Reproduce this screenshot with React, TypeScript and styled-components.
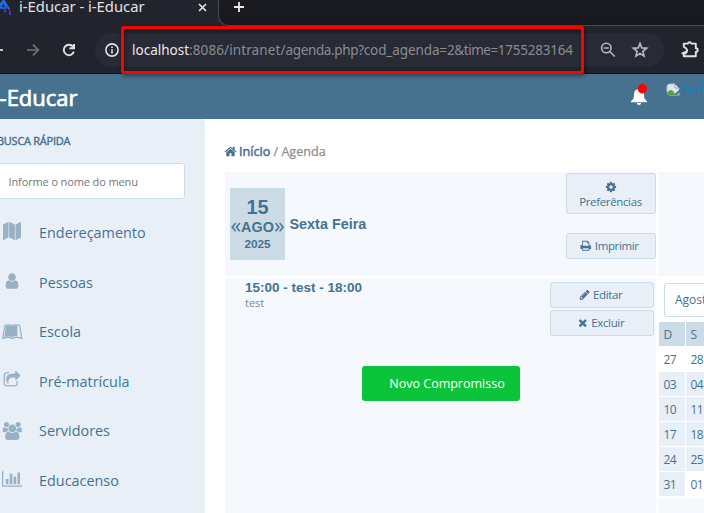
import React from "react";
import styled, { createGlobalStyle } from "styled-components";

const GlobalStyle = createGlobalStyle`
  * { box-sizing: border-box; }
  html, body { margin: 0; padding: 0; overflow: hidden; }
  body { font-family: "Open Sans", sans-serif; color: #47728f; background: #fff; }
`;

const Window = styled.div`
  width: 704px;
  height: 513px;
  overflow: hidden;
  display: flex;
  flex-direction: column;
`;

/* Browser chrome */
const TabStrip = styled.div`
  height: 26px;
  flex: none;
  display: flex;
  background: linear-gradient(#1b1c22, #17181c);
`;
const Tab = styled.div`
  width: 218px;
  height: 26px;
  display: flex;
  align-items: flex-start;
  background: #22242d;
  font: 14.8px/18px "Noto Sans", sans-serif;
  color: #e2e2e3;
`;
const Favicon = styled.svg`
  width: 11px;
  height: 16px;
  flex: none;
`;
const TabTitle = styled.span`
  width: 179px;
  margin: -3px 0 0 8px;
  white-space: nowrap;
`;
const CloseIcon = styled.svg`
  width: 9px;
  height: 9px;
  margin-top: 3px;
`;
const StripRest = styled.div`
  flex: 1;
  border-left: 1px solid #4b4c53;
  border-bottom: 1px solid #4b4c53;
  border-bottom-left-radius: 10px;
  background: linear-gradient(#1b1c22, #17181c);
`;
const StripCorner = styled.div`
  flex: 1;
  display: flex;
  background: #22242d;
`;
const PlusIcon = styled.svg`
  display: block;
  width: 12px;
  height: 12px;
  margin: 1px 0 0 14px;
`;
const Toolbar = styled.div`
  height: 48px;
  flex: none;
  display: flex;
  align-items: center;
  background: #22242d;
  border-bottom: 1px solid #101116;
`;
const NavButtons = styled.svg`
  width: 95px;
  height: 34px;
  flex: none;
`;
const Omnibox = styled.div`
  width: 569px;
  height: 34px;
  display: flex;
  align-items: center;
  border-radius: 17px;
  background: #282a35;
`;
const InfoChip = styled.div`
  width: 27px;
  height: 34px;
  flex: none;
  display: flex;
  align-items: center;
  padding-left: 10px;
`;
const UrlFrame = styled.div`
  width: 463px;
  height: 48px;
  flex: none;
  position: relative;
  margin-left: -1px;
  display: flex;
  align-items: center;
  padding-left: 8px;
  border: 3px solid #f00;
  border-radius: 2px;
  box-shadow: 1px 2px 4px rgba(0, 0, 0, 0.45), inset 1px 2px 4px rgba(0, 0, 0, 0.3);
  font: 13.5px/20px "Noto Sans", sans-serif;
  white-space: nowrap;
`;
const UrlPart = styled.span<{ $tracking: number; $host?: boolean }>`
  letter-spacing: ${(p) => p.$tracking}px;
  color: ${(p) => (p.$host ? "#e8e8ea" : "#8b8c92")};
`;
const OmniIcons = styled.svg`
  width: 70px;
  height: 34px;
  margin-left: 10px;
`;
const PuzzleIcon = styled.svg`
  width: 22px;
  height: 22px;
  margin-left: 14px;
  flex: none;
`;

/* Application header */
const Header = styled.header`
  height: 45px;
  flex: none;
  display: flex;
  background: #47728f;
  color: #fff;
`;
const Brand = styled.div`
  width: 636px;
  margin-left: -6px;
  flex: none;
  font-size: 22px;
  line-height: 46px;
  -webkit-text-stroke: 0.7px #fff;
`;
const BellIcon = styled.svg`
  width: 20px;
  height: 24px;
  margin-top: 8px;
  flex: none;
`;
const Avatar = styled.div`
  display: flex;
  margin: 9px 0 0 16px;
  color: #1e7fbd;
  font-size: 12px;
  line-height: 14px;
  white-space: nowrap;
  -webkit-text-stroke: 0.3px currentColor;
`;
const BrokenImage = styled.svg`
  width: 14px;
  height: 14px;
  flex: none;
`;

/* Sidebar */
const Body = styled.div`
  flex: 1;
  min-height: 0;
  display: flex;
`;
const Sidebar = styled.aside`
  width: 205px;
  flex: none;
  background: #e8eff7;
`;
const SearchLabel = styled.div`
  margin: 14px 0 0 -3px;
  font-size: 11px;
  line-height: 16px;
  letter-spacing: -0.26px;
  -webkit-text-stroke: 0.4px #47728f;
`;
const SearchBox = styled.div`
  width: 195px;
  height: 36px;
  margin: 14px 0 0 -10px;
  padding-left: 17.5px;
  border: 1px solid #ccdce6;
  border-radius: 3px;
  background: #fff;
  color: #757575;
  font-size: 11px;
  line-height: 36px;
  letter-spacing: -0.12px;
`;
const Menu = styled.nav`
  display: grid;
  grid-auto-rows: 49.6px;
  margin-top: 9px;
`;
const MenuItem = styled.div`
  display: flex;
  align-items: center;
  font-size: 14.4px;
  line-height: 20px;
`;
const MenuIconSlot = styled.span`
  width: 39px;
  height: 23px;
  display: flex;
  flex: none;
`;
const MenuLabel = styled.span`
  margin-top: 0.6px;
`;
const Glyph = styled.svg<{ $w: number; $h: number; $x?: number; $y?: number }>`
  width: ${(p) => p.$w}px;
  height: ${(p) => p.$h}px;
  margin: ${(p) => p.$y ?? 0}px 0 0 ${(p) => p.$x ?? 0}px;
  flex: none;
  fill: currentColor;
`;
const MenuGlyph = styled(Glyph)`
  color: #98b1c5;
`;

/* Content */
const Main = styled.main`
  flex: 1;
  min-width: 0;
  padding-left: 20px;
  display: flex;
  flex-direction: column;
`;
const Breadcrumb = styled.div`
  height: 53px;
  flex: none;
  display: flex;
  align-items: center;
  margin-left: -1px;
  padding-top: 12px;
  font-size: 12.6px;
  color: #8d8d8d;
  -webkit-text-stroke: 0.25px currentColor;
  white-space: pre;
`;
const HomeLink = styled.span`
  display: flex;
  align-items: center;
  gap: 2px;
  color: #47728f;
  -webkit-text-stroke: 0.5px currentColor;
`;
const Board = styled.div`
  flex: 1;
  display: grid;
  grid-template-columns: 431px 150px;
  grid-template-rows: 104px 1fr;
  gap: 2px;
`;
const Panel = styled.section`
  background: #f5f8fd;
`;
const DayPanel = styled(Panel)`
  display: flex;
  padding-left: 5px;
`;
const DateCard = styled.div`
  width: 55px;
  height: 72px;
  margin-top: 16px;
  padding-top: 8px;
  background: #ccdce6;
  text-align: center;
  font-family: "Liberation Sans", Arial, sans-serif;
  font-weight: bold;
`;
const DayNumber = styled.div`
  font-size: 20px;
  line-height: 22px;
`;
const MonthRow = styled.div`
  display: flex;
  justify-content: center;
  align-items: center;
  font-size: 14.4px;
  line-height: 18px;
`;
const Arrow = styled.span`
  font: 21.5px/16px "Open Sans", sans-serif;
  margin-top: -5px;
`;
const Year = styled.div`
  font-size: 11.8px;
  line-height: 16px;
`;
const Weekday = styled.div`
  flex: 1;
  padding: 43px 0 0 4.5px;
  font: bold 14.4px/18px "Liberation Sans", Arial, sans-serif;
`;
const DayActions = styled.div`
  display: flex;
  flex-direction: column;
  gap: 19px;
  padding-top: 1px;
`;
const Button = styled.button<{ $w: number; $h: number; $stacked?: boolean }>`
  width: ${(p) => p.$w}px;
  height: ${(p) => p.$h}px;
  padding: ${(p) => (p.$stacked ? "2px 1px 0 0" : "0 3px 1px 0")};
  display: flex;
  flex-direction: ${(p) => (p.$stacked ? "column" : "row")};
  align-items: center;
  justify-content: center;
  gap: ${(p) => (p.$stacked ? 1 : 3)}px;
  border: 1px solid #ccdce6;
  border-radius: 3px;
  background: #e8eff7;
  color: #47728f;
  font: 11.5px/15px "Open Sans", sans-serif;
  letter-spacing: -0.35px;
`;
const EventsPanel = styled(Panel)`
  padding: 1px 2px 0 20px;
`;
const EventRow = styled.div`
  display: flex;
  justify-content: space-between;
`;
const EventTitle = styled.div`
  font: bold 13.5px/17px "Liberation Sans", Arial, sans-serif;
`;
const EventText = styled.div`
  font-size: 11px;
  line-height: 14px;
  color: #7a8a9a;
`;
const EventActions = styled.div`
  display: flex;
  flex-direction: column;
  gap: 2px;
  padding-top: 3px;
`;
const NewButton = styled.button`
  display: block;
  width: 158px;
  height: 35px;
  margin: 30px 0 0 117px;
  padding: 0 0 0 12px;
  border: 0;
  border-radius: 3px;
  background: #0cc43a;
  color: #fff;
  font: 12.5px/35px "Open Sans", sans-serif;
`;
const CalendarColumn = styled.div`
  display: flex;
  flex-direction: column;
`;
const MonthSelect = styled.div`
  height: 34px;
  margin: 5px 0 5px 6px;
  flex: none;
  padding-left: 10px;
  border: 1px solid #ccdce6;
  border-radius: 3px;
  font-size: 12px;
  line-height: 32px;
`;
const DayGrid = styled.div`
  display: grid;
  grid-template-columns: 26px 26px;
  grid-auto-rows: 24px;
  gap: 1px;
  padding: 0 0 3px 1px;
`;
const DayCell = styled.div<{ $tone: "head" | "in" | "out" }>`
  padding-left: 4.5px;
  font-size: 12px;
  line-height: 25px;
  letter-spacing: -0.5px;
  background: ${(p) => ({ head: "#ccdce6", in: "#e8eff7", out: "#fff" })[p.$tone]};
`;
const CalendarFooter = styled(Panel)`
  flex: 1;
`;

const paths = {
  map: "M512 0q13 0 22.5 9.5t9.5 22.5v1472q0 20-17 28l-480 256q-7 4-15 4-13 0-22.5-9.5t-9.5-22.5v-1472q0-20 17-28l480-256q7-4 15-4zm1248 0q13 0 22.5 9.5t9.5 22.5v1472q0 20-17 28l-480 256q-7 4-15 4-13 0-22.5-9.5t-9.5-22.5v-1472q0-20 17-28l480-256q7-4 15-4zm-1120 0q8 0 14 3l512 256q18 10 18 29v1472q0 13-9.5 22.5t-22.5 9.5q-8 0-14-3l-512-256q-18-10-18-29v-1472q0-13 9.5-22.5t22.5-9.5z",
  user: "M1536 1399q0 109-62.5 187t-150.5 78h-854q-88 0-150.5-78t-62.5-187q0-85 8.5-160.5t31.5-152 58.5-131 94-89 134.5-34.5q131 128 313 128t313-128q76 0 134.5 34.5t94 89 58.5 131 31.5 152 8.5 160.5zm-256-887q0 159-112.5 271.5t-271.5 112.5-271.5-112.5-112.5-271.5 112.5-271.5 271.5-112.5 271.5 112.5 112.5 271.5z",
  share:
    "M1472 989v259q0 119-84.5 203.5t-203.5 84.5h-832q-119 0-203.5-84.5t-84.5-203.5v-832q0-119 84.5-203.5t203.5-84.5h255q13 0 22.5 9.5t9.5 22.5q0 27-26 32-77 26-133 60-10 4-16 4h-112q-66 0-113 47t-47 113v832q0 66 47 113t113 47h832q66 0 113-47t47-113v-214q0-19 18-29 28-13 54-37 16-16 35-8 21 9 21 29zm237-496l-384 384q-18 19-45 19-12 0-25-5-39-17-39-59v-192h-160q-323 0-438 131-119 137-74 473 3 23-20 34-8 2-12 2-16 0-26-13-10-14-21-31t-39.5-68.5-49.5-99.5-38.5-114-17.5-122q0-49 3.5-91t14-90 28-88 47-81.5 68.5-74 94.5-61.5 124.5-48.5 159.5-30.5 196.5-11h160v-192q0-42 39-59 13-5 25-5 26 0 45 19l384 384q19 19 19 45t-19 45z",
  users:
    "M657 896q-162 5-265 128h-134q-82 0-138-40.5t-56-118.5q0-353 124-353 6 0 43.5 21t97.5 42.5 119 21.5q67 0 133-23-5 37-5 66 0 139 81 256zm1071 637q0 120-73 189.5t-194 69.5h-874q-121 0-194-69.5t-73-189.5q0-53 3.5-103.5t14-109 26.5-108.5 43-97.5 62-81 85.5-53.5 111.5-20q10 0 43 21.5t73 48 107 48 135 21.5 135-21.5 107-48 73-48 43-21.5q61 0 111.5 20t85.5 53.5 62 81 43 97.5 26.5 108.5 14 109 3.5 103.5zm-1024-1277q0 106-75 181t-181 75-181-75-75-181 75-181 181-75 181 75 75 181zm704 384q0 159-112.5 271.5t-271.5 112.5-271.5-112.5-112.5-271.5 112.5-271.5 271.5-112.5 271.5 112.5 112.5 271.5zm576 225q0 78-56 118.5t-138 40.5h-134q-103-123-265-128 81-117 81-256 0-29-5-66 66 23 133 23 59 0 119-21.5t97.5-42.5 43.5-21q124 0 124 353zm-128-609q0 106-75 181t-181 75-181-75-75-181 75-181 181-75 181 75 75 181z",
  chart:
    "M640 896v512h-256v-512h256zm384-512v1024h-256v-1024h256zm1024 1152v128h-2048v-1536h128v1408h1920zm-640-896v768h-256v-768h256zm384-384v1152h-256v-1152h256z",
  home: "M1472 992v480q0 26-19 45t-45 19h-384v-384h-256v384h-384q-26 0-45-19t-19-45v-480q0-1 .5-3t.5-3l575-474 575 474q1 2 1 6zm223-69l-62 74q-8 9-21 11h-3q-13 0-21-7l-692-577-692 577q-12 8-24 7-13-2-21-11l-62-74q-8-10-7-23.5t11-21.5l719-599q32-26 76-26t76 26l244 204v-195q0-14 9-23t23-9h192q14 0 23 9t9 23v408l219 182q10 8 11 21.5t-7 23.5z",
  cog: "M1152 896q0-106-75-181t-181-75-181 75-75 181 75 181 181 75 181-75 75-181zm512-109v222q0 12-8 23t-20 13l-185 28q-19 54-39 91 35 50 107 138 10 12 10 25t-9 23q-27 37-99 108t-94 71q-12 0-26-9l-138-108q-44 23-91 38-16 136-29 186-7 28-36 28h-222q-14 0-24.5-8.5t-11.5-21.5l-28-184q-49-16-90-37l-141 107q-10 9-25 9-14 0-25-11-126-114-165-168-7-10-7-23 0-12 8-23 15-21 51-66.5t54-70.5q-27-50-41-99l-183-27q-13-2-21-12.5t-8-23.5v-222q0-12 8-23t19-13l186-28q14-46 39-92-40-57-107-138-10-12-10-24 0-10 9-23 26-36 98.5-107.5t94.5-71.5q13 0 26 10l138 107q44-23 91-38 16-136 29-186 7-28 36-28h222q14 0 24.5 8.5t11.5 21.5l28 184q49 16 90 37l142-107q9-9 24-9 13 0 25 10 129 119 165 170 7 8 7 22 0 12-8 23-15 21-51 66.5t-54 70.5q26 50 41 98l183 28q13 2 21 12.5t8 23.5z",
  times:
    "M1490 1322q0 40-28 68l-136 136q-28 28-68 28t-68-28l-294-294-294 294q-28 28-68 28t-68-28l-136-136q-28-28-28-68t28-68l294-294-294-294q-28-28-28-68t28-68l136-136q28-28 68-28t68 28l294 294 294-294q28-28 68-28t68 28l136 136q28 28 28 68t-28 68l-294 294 294 294q28 28 28 68z",
  pencil:
    "M491 1536l91-91-235-235-91 91v107h128v128h107zm523-928q0-22-22-22-10 0-17 7l-542 542q-7 7-7 17 0 22 22 22 10 0 17-7l542-542q7-7 7-17zm-54-192l416 416-832 832h-416v-416zm683 96q0 53-37 90l-166 166-416-416 166-165q36-38 90-38 53 0 91 38l235 234q37 39 37 91z",
  print:
    "M448 1536h896v-256h-896v256zm0-640h896v-384h-160q-40 0-68-28t-28-68v-160h-640v640zm1152 64q0-26-19-45t-45-19-45 19-19 45 19 45 45 19 45-19 19-45zm128 0v416q0 13-9.5 22.5t-22.5 9.5h-224v160q0 40-28 68t-68 28h-960q-40 0-68-28t-28-68v-160h-224q-13 0-22.5-9.5t-9.5-22.5v-416q0-79 56.5-135.5t135.5-56.5h64v-544q0-40 28-68t68-28h672q40 0 88 20t76 48l152 152q28 28 48 76t20 88v256h64q79 0 135.5 56.5t56.5 135.5z",
};

const menu = [
  {
    label: "Endereçamento",
    icon: <MenuGlyph $w={18} $h={18} $x={3} $y={1} viewBox="0 0 1792 1792"><path d={paths.map} /></MenuGlyph>,
  },
  {
    label: "Pessoas",
    icon: <MenuGlyph $w={18} $h={18} $x={3} $y={1.3} viewBox="0 0 1792 1792"><path d={paths.user} /></MenuGlyph>,
  },
  {
    label: "Escola",
    icon: (
      <MenuGlyph $w={21} $h={16} $x={1.5} $y={3.3} viewBox="0 0 21 16">
        <path d="M3.8 2.2Q7.5 1 10.3 2.3Q13.2 1 15.4 1.7V12.5Q12.5 11.8 10.3 13Q7 11.8 2.4 13Z" />
        <path
          d="M3 1.3Q7 .2 10.3 1.6Q14 .2 17.6 1.3L19.8 14.4Q14.5 12.4 10.3 14.4Q6 12.4 .7 14.4Z"
          fill="none"
          stroke="currentColor"
          strokeWidth="1.2"
        />
      </MenuGlyph>
    ),
  },
  {
    label: "Pré-matrícula",
    icon: <MenuGlyph $w={18} $h={18} $x={3} $y={1.3} viewBox="0 0 1792 1792"><path d={paths.share} /></MenuGlyph>,
  },
  {
    label: "Servidores",
    icon: <MenuGlyph $w={20.6} $h={18} $x={1.7} $y={2.3} viewBox="0 0 2048 1792"><path d={paths.users} /></MenuGlyph>,
  },
  {
    label: "Educacenso",
    icon: <MenuGlyph $w={20.6} $h={18} $x={1.5} $y={1} viewBox="0 0 2048 1792"><path d={paths.chart} /></MenuGlyph>,
  },
];

const url = [
  { text: "localhost", tracking: 0, host: true },
  { text: ":8086/intranet/", tracking: 0.1 },
  { text: "agenda.php?", tracking: -0.36 },
  { text: "cod_agenda=", tracking: -0.1 },
  { text: "2&time=", tracking: -0.44 },
  { text: "1755283164", tracking: -0.24 },
];

const weeks = [
  ["27", "28"],
  ["03", "04"],
  ["10", "11"],
  ["17", "18"],
  ["24", "25"],
  ["31", "01"],
];
const isOutside = (row: number, col: number) => row === 0 || (row === 5 && col === 1);

export default function App() {
  return (
    <Window>
      <GlobalStyle />
      <TabStrip>
        <Tab>
          <Favicon viewBox="0 0 11 16" fill="none" strokeWidth="1.5">
            <path d="M-1 6L3.5 0L9.5 9.5M3.5 1L6 8H0L3.5 2" stroke="#1c6ef2" />
            <path d="M5 9.5V12.5M10 11V15" stroke="#7426c9" strokeWidth="1.8" />
          </Favicon>
          <TabTitle>i-Educar - i-Educar</TabTitle>
          <CloseIcon viewBox="0 0 9 9" stroke="#e2e2e3" strokeWidth="1.7">
            <path d="M1 1L8 8M8 1L1 8" />
          </CloseIcon>
        </Tab>
        <StripCorner>
          <StripRest>
            <PlusIcon viewBox="0 0 12 12" stroke="#e8e8e8" strokeWidth="1.8">
              <path d="M6 1V11M1 6H11" />
            </PlusIcon>
          </StripRest>
        </StripCorner>
      </TabStrip>

      <Toolbar>
        <NavButtons viewBox="0 0 95 34" fill="none" strokeWidth="1.7">
          <path d="M-8 17H3" stroke="#dedede" />
          <path d="M27 17H38M33 11.7L38.3 17L33 22.3" stroke="#74757b" />
          <path d="M73 13.7A5.2 5.2 0 1 0 73.9 18.6" stroke="#e2e2e2" strokeWidth="1.9" />
          <path d="M75 11V16.3H69.3V14.5L73 14V11Z" fill="#e2e2e2" />
        </NavButtons>
        <Omnibox>
          <InfoChip>
            <Glyph $w={14} $h={14} viewBox="0 0 14 14">
              <circle cx="7" cy="7" r="6.1" fill="none" stroke="#e2e2e2" strokeWidth="1.6" />
              <path d="M6.2 6.2H7.8V10.4H6.2ZM6.2 3.6H7.8V5H6.2Z" fill="#e2e2e2" />
            </Glyph>
          </InfoChip>
          <UrlFrame>
            {url.map((part) => (
              <UrlPart key={part.text} $tracking={part.tracking} $host={part.host}>
                {part.text}
              </UrlPart>
            ))}
          </UrlFrame>
          <OmniIcons viewBox="0 0 70 34" fill="none" stroke="#b9babd" strokeWidth="1.6">
            <circle cx="12.3" cy="15" r="4.7" />
            <path d="M16 18.7L20.8 23.5M9.8 15H14.8" />
            <path
              d="M46 10.4L47.8 14.9L52.7 15.2L48.9 18.4L50.1 23.1L46 20.5L41.9 23.1L43.1 18.4L39.3 15.2L44.2 14.9Z"
              strokeLinejoin="miter"
            />
          </OmniIcons>
        </Omnibox>
        <PuzzleIcon viewBox="0 0 22 22" fill="none" stroke="#e2e2e2" strokeWidth="1.9">
          <path
            d="M5.8 8.6V4.6H9.8A1.9 1.9 0 0 1 13.4 4.6H17.8V9.2A1.9 1.9 0 0 1 17.8 13V17.2H5.8V14.9A3 3 0 0 0 5.8 8.4M3.6 14.6L8.4 12.6"
            strokeLinejoin="round"
          />
        </PuzzleIcon>
      </Toolbar>

      <Header>
        <Brand>i-Educar</Brand>
        <BellIcon viewBox="0 0 20 24">
          <path
            d="M9 7C12.5 7 14 9.5 14 13C14 16.5 15 17.6 17 19V20.3H1V19C3 17.6 4 16.5 4 13C4 9.5 5.5 7 9 7ZM6.8 21H11.2Q10.9 23 9 23Q7.1 23 6.8 21Z"
            fill="#fff"
          />
          <circle cx="12.3" cy="6.7" r="4.7" fill="#f00" />
        </BellIcon>
        <Avatar>
          <BrokenImage viewBox="0 0 14 14">
            <path d="M1 4Q1 1 4 1H9L13 5V12H4Q1 12 1 8Z" fill="#dbe6f4" stroke="#bcc6d2" />
            <path d="M1 10Q4 5 7 8L10 12H3Z" fill="#57a339" />
            <path d="M9 1V5H13Z" fill="#fff" stroke="#8b949c" />
            <path d="M8 12L14 6V9L11 12Z" fill="#47728f" />
          </BrokenImage>
          Perfil
        </Avatar>
      </Header>

      <Body>
        <Sidebar>
          <SearchLabel>BUSCA RÁPIDA</SearchLabel>
          <SearchBox>Informe o nome do menu</SearchBox>
          <Menu>
            {menu.map((m) => (
              <MenuItem key={m.label}>
                <MenuIconSlot>{m.icon}</MenuIconSlot>
                <MenuLabel>{m.label}</MenuLabel>
              </MenuItem>
            ))}
          </Menu>
        </Sidebar>

        <Main>
          <Breadcrumb>
            <HomeLink>
              <Glyph $w={13} $h={13} viewBox="0 0 1792 1792"><path d={paths.home} /></Glyph>
              Início
            </HomeLink>
            {" / Agenda"}
          </Breadcrumb>
          <Board>
            <DayPanel>
              <DateCard>
                <DayNumber>15</DayNumber>
                <MonthRow>
                  <Arrow>«</Arrow>AGO<Arrow>»</Arrow>
                </MonthRow>
                <Year>2025</Year>
              </DateCard>
              <Weekday>Sexta Feira</Weekday>
              <DayActions>
                <Button $w={90} $h={41} $stacked>
                  <Glyph $w={12} $h={12} viewBox="0 0 1792 1792"><path d={paths.cog} /></Glyph>
                  Preferências
                </Button>
                <Button $w={90} $h={26}>
                  <Glyph $w={11.5} $h={11.5} viewBox="0 0 1792 1792"><path d={paths.print} /></Glyph>
                  Imprimir
                </Button>
              </DayActions>
            </DayPanel>
            <Panel />
            <EventsPanel>
              <EventRow>
                <div>
                  <EventTitle>15:00 - test - 18:00</EventTitle>
                  <EventText>test</EventText>
                </div>
                <EventActions>
                  <Button $w={104} $h={26}>
                    <Glyph $w={11.5} $h={11.5} viewBox="0 0 1792 1792"><path d={paths.pencil} /></Glyph>
                    Editar
                  </Button>
                  <Button $w={104} $h={26}>
                    <Glyph $w={11.5} $h={11.5} viewBox="0 0 1792 1792"><path d={paths.times} /></Glyph>
                    Excluir
                  </Button>
                </EventActions>
              </EventRow>
              <NewButton>Novo Compromisso</NewButton>
            </EventsPanel>
            <CalendarColumn>
              <MonthSelect>Agosto</MonthSelect>
              <DayGrid>
                <DayCell $tone="head">D</DayCell>
                <DayCell $tone="head">S</DayCell>
                {weeks.map((week, r) =>
                  week.map((day, c) => (
                    <DayCell key={`${r}-${c}`} $tone={isOutside(r, c) ? "out" : "in"}>
                      {day}
                    </DayCell>
                  )),
                )}
              </DayGrid>
              <CalendarFooter />
            </CalendarColumn>
          </Board>
        </Main>
      </Body>
    </Window>
  );
}
